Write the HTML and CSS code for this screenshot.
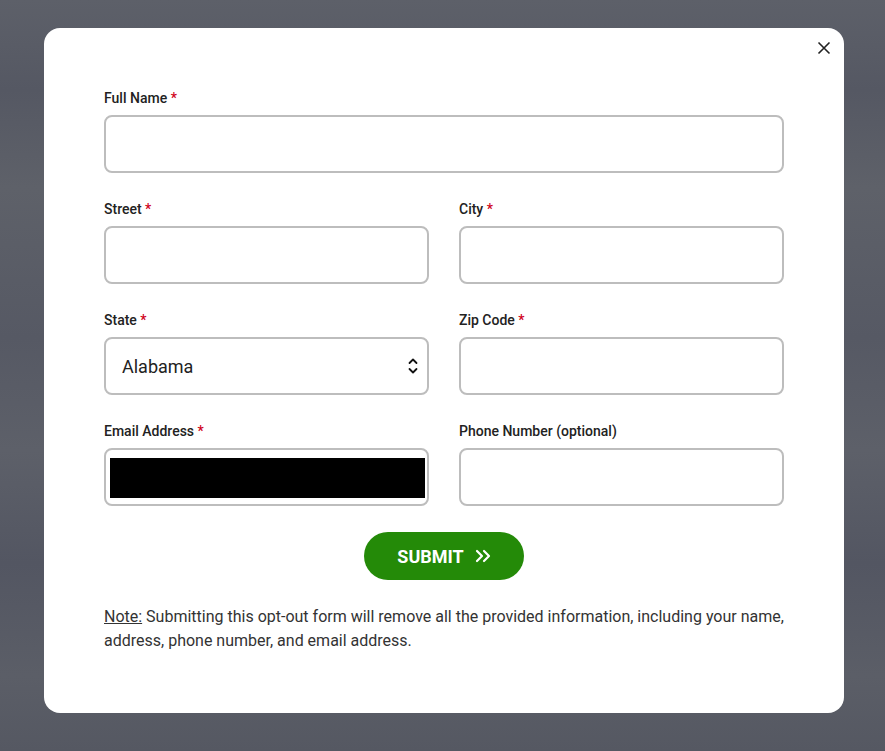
FILE: index.html
```html
<!DOCTYPE html>
<html lang="en">
<head>
<meta charset="utf-8">
<title>Opt-out form</title>
<link rel="stylesheet" href="styles.css">
</head>
<body>
<div class="overlay">
  <div class="modal">
    <button class="close" type="button" aria-label="Close">
      <svg width="14" height="14" viewBox="0 0 14 14"><path d="M1.5 1.5 L12.5 12.5 M12.5 1.5 L1.5 12.5" stroke="#222" stroke-width="1.6" fill="none"/></svg>
    </button>
    <form class="form">
      <div class="field full">
        <label class="label">Full Name <span class="req">*</span></label>
        <input class="input" type="text">
      </div>
      <div class="field">
        <label class="label">Street <span class="req">*</span></label>
        <input class="input" type="text">
      </div>
      <div class="field">
        <label class="label">City <span class="req">*</span></label>
        <input class="input" type="text">
      </div>
      <div class="field">
        <label class="label">State <span class="req">*</span></label>
        <div class="select-wrap">
          <select class="input select"><option>Alabama</option></select>
          <svg class="chev" width="10" height="18" viewBox="0 0 10 18"><path d="M1.5 6 L5 2.5 L8.5 6 M1.5 12 L5 15.5 L8.5 12" stroke="#111" stroke-width="1.8" fill="none" stroke-linecap="round" stroke-linejoin="round"/></svg>
        </div>
      </div>
      <div class="field">
        <label class="label">Zip Code <span class="req">*</span></label>
        <input class="input" type="text">
      </div>
      <div class="field">
        <label class="label">Email Address <span class="req">*</span></label>
        <div class="email-wrap">
          <input class="input" type="email">
          <span class="redact"></span>
        </div>
      </div>
      <div class="field">
        <label class="label">Phone Number (optional)</label>
        <input class="input" type="tel">
      </div>
    </form>
    <div class="actions">
      <button class="submit" type="button">SUBMIT
        <svg width="16" height="14" viewBox="0 0 16 14"><path d="M2 2 L7 7 L2 12 M9 2 L14 7 L9 12" stroke="#fff" stroke-width="2.2" fill="none" stroke-linecap="round" stroke-linejoin="round"/></svg>
      </button>
    </div>
    <p class="note"><span class="note-key">Note:</span> Submitting this opt-out form will remove all the provided information, including your name, address, phone number, and email address.</p>
  </div>
</div>
</body>
</html>
```
FILE: styles.css
```css
html, body {
  margin: 0;
  padding: 0;
}
body {
  width: 885px;
  height: 751px;
  overflow: hidden;
  font-family: Roboto, "Liberation Sans", Arial, sans-serif;
  background: #5a5d67;
}
.overlay {
  box-sizing: border-box;
  width: 885px;
  height: 751px;
  padding: 28px 41px 38px 44px;
  background: linear-gradient(180deg, #5d6069 0%, #555863 12%, #5e6169 25%, #565964 45%, #5d6069 60%, #535662 75%, #5b5e67 90%, #555862 100%);
}
.modal {
  position: relative;
  box-sizing: border-box;
  width: 800px;
  height: 685px;
  background: #fff;
  border-radius: 16px;
  padding: 62px 60px 0 60px;
}
.close {
  position: absolute;
  top: 13px;
  right: 13px;
  width: 14px;
  height: 14px;
  padding: 0;
  border: 0;
  background: none;
  display: flex;
}
.form {
  display: grid;
  grid-template-columns: 325px 325px;
  column-gap: 30px;
  row-gap: 28px;
}
.field {
  display: flex;
  flex-direction: column;
}
.field.full {
  grid-column: 1 / span 2;
}
.label {
  font-size: 14px;
  line-height: 17px;
  font-weight: 500;
  color: #222;
  margin-bottom: 8px;
}
.req {
  color: #d0021b;
}
.input {
  box-sizing: border-box;
  width: 100%;
  height: 58px;
  border: 2px solid #bdbdbd;
  border-radius: 8px;
  background: #fff;
  font-family: Roboto, "Liberation Sans", Arial, sans-serif;
  font-size: 18px;
  color: #222;
  padding: 0 16px;
  margin: 0;
  outline: none;
}
.select-wrap, .email-wrap {
  position: relative;
}
.select {
  appearance: none;
  -webkit-appearance: none;
}
.chev {
  position: absolute;
  right: 11px;
  top: 20px;
  pointer-events: none;
}
.redact {
  position: absolute;
  left: 6px;
  top: 10px;
  width: 315px;
  height: 40px;
  background: #000;
}
.actions {
  display: flex;
  justify-content: center;
  margin-top: 26px;
}
.submit {
  box-sizing: border-box;
  width: 160px;
  height: 48px;
  border: 0;
  border-radius: 24px;
  background: #248a08;
  color: #fff;
  font-family: Roboto, "Liberation Sans", Arial, sans-serif;
  font-size: 18px;
  font-weight: 700;
  display: flex;
  align-items: center;
  justify-content: center;
  gap: 11px;
  padding: 0;
}
.note {
  margin: 25px 0 0 0;
  font-size: 16px;
  line-height: 24px;
  color: #333;
}
.note-key {
  text-decoration: underline;
}
```
